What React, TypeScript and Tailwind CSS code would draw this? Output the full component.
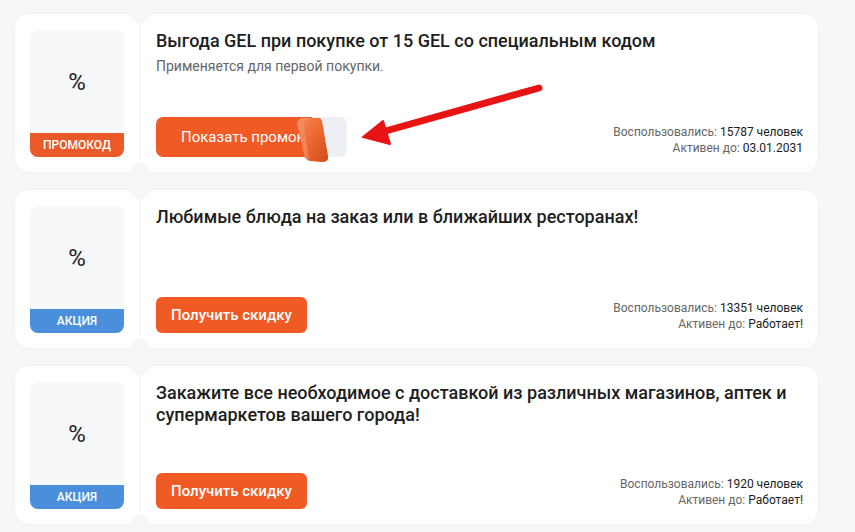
import React from 'react';

type Offer = {
  id: number;
  title: string;
  subtitle?: string;
  kind: 'promo' | 'sale';
  used: number;
  until: string;
};

const offers: Offer[] = [
  {
    id: 1,
    title: 'Выгода GEL при покупке от 15 GEL со специальным кодом',
    subtitle: 'Применяется для первой покупки.',
    kind: 'promo',
    used: 15787,
    until: '03.01.2031',
  },
  {
    id: 2,
    title: 'Любимые блюда на заказ или в ближайших ресторанах!',
    kind: 'sale',
    used: 13351,
    until: 'Работает!',
  },
  {
    id: 3,
    title: 'Закажите все необходимое с доставкой из различных магазинов, аптек и супермаркетов вашего города!',
    kind: 'sale',
    used: 1920,
    until: 'Работает!',
  },
];

const PromoButton: React.FC = () => (
  <div className="relative h-[40px] w-[191px] rounded-[7px] bg-[#eeeff5]">
    <div className="flex h-full w-[156px] items-center whitespace-nowrap rounded-l-[7px] bg-[#f05a24] pl-[25px] text-[15px] text-white">
      Показать промок
    </div>
    {/* curled corner */}
    <svg className="absolute left-[136px] top-0 h-[46px] w-[40px]" viewBox="0 0 40 46">
      <defs>
        <linearGradient id="peel" x1="0" y1="0" x2="1" y2="1">
          <stop offset="0" stopColor="#f58a5a" />
          <stop offset="0.45" stopColor="#ee6a34" />
          <stop offset="1" stopColor="#cf4a17" />
        </linearGradient>
      </defs>
      <path d="M5 6 Q7 0 16 1 L27 1 Q29 1 30 4 L36 39 Q37 45 30 45 L18 44 Q13 43 12 37 Z" fill="url(#peel)" />
      <path d="M5 6 Q7 0 16 1 L18 1 Q11 3 12 10 L17 43 Q13 42 12 37 Z" fill="#f7956a" opacity="0.6" />
    </svg>
  </div>
);

const OfferCard: React.FC<{ offer: Offer }> = ({ offer }) => (
  <div className="relative flex h-[158px] rounded-[14px] bg-white shadow-[0_0_3px_rgba(0,0,0,0.05)]">
    {/* ticket notches */}
    <div className="absolute left-[115px] top-[-10px] h-[20px] w-[20px] rounded-full bg-[#f6f7f9]" />
    <div className="absolute bottom-[-10px] left-[115px] h-[20px] w-[20px] rounded-full bg-[#f6f7f9]" />

    <div className="w-[125px] shrink-0 pb-[15px] pl-[15px] pr-[16px] pt-[16px]">
      <div className="flex h-full flex-col overflow-hidden rounded-[8px] bg-[#f7f8fa]">
        <div className="flex flex-1 items-center justify-center text-[24px] text-[#222]">%</div>
        <div
          className={
            offer.kind === 'promo'
              ? 'flex h-[24px] items-center justify-center bg-[#ea5a28] text-[12px] font-medium uppercase text-white'
              : 'flex h-[24px] items-center justify-center bg-[#4a8fdc] text-[12px] font-medium uppercase text-white'
          }
        >
          {offer.kind === 'promo' ? 'Промокод' : 'Акция'}
        </div>
      </div>
    </div>

    <div className="my-[12px] border-l border-dotted border-[#e8eaee]" />

    <div className="flex flex-1 flex-col justify-between pb-[15px] pl-[15px] pr-[15px] pt-[16px]">
      <div>
        <h3 className="text-[18px] font-medium leading-[22px] text-[#1e1e1e]">{offer.title}</h3>
        {offer.subtitle && <p className="mt-[4px] text-[14px] leading-[20px] text-[#666]">{offer.subtitle}</p>}
      </div>
      <div className="flex items-end justify-between">
        {offer.kind === 'promo' ? (
          <PromoButton />
        ) : (
          <button className="h-[36px] rounded-[6px] bg-[#f05a24] px-[15px] text-[15px] font-medium text-white">
            Получить скидку
          </button>
        )}
        <div className="pb-px text-right text-[12px] leading-[16px] text-[#666]">
          <div>
            Воспользовались: <span className="text-[#222]">{offer.used} человек</span>
          </div>
          <div>
            Активен до: <span className="text-[#222]">{offer.until}</span>
          </div>
        </div>
      </div>
    </div>
  </div>
);

export default function App() {
  return (
    <div className="relative min-h-screen bg-[#f6f7f9] pl-[15px] pt-[14px] font-['Roboto',sans-serif]">
      <div className="flex w-[803px] flex-col gap-[18px]">
        {offers.map(o => (
          <OfferCard key={o.id} offer={o} />
        ))}
      </div>

      {/* red pointer arrow */}
      <svg className="pointer-events-none absolute left-0 top-0 h-[532px] w-[855px]" viewBox="0 0 855 532">
        <line x1="539" y1="88" x2="382" y2="132" stroke="#e81414" strokeWidth="7" strokeLinecap="round" />
        <polygon points="363,137 383,121 390,144" fill="#e81414" stroke="#e81414" strokeWidth="2" strokeLinejoin="round" />
      </svg>
    </div>
  );
}
